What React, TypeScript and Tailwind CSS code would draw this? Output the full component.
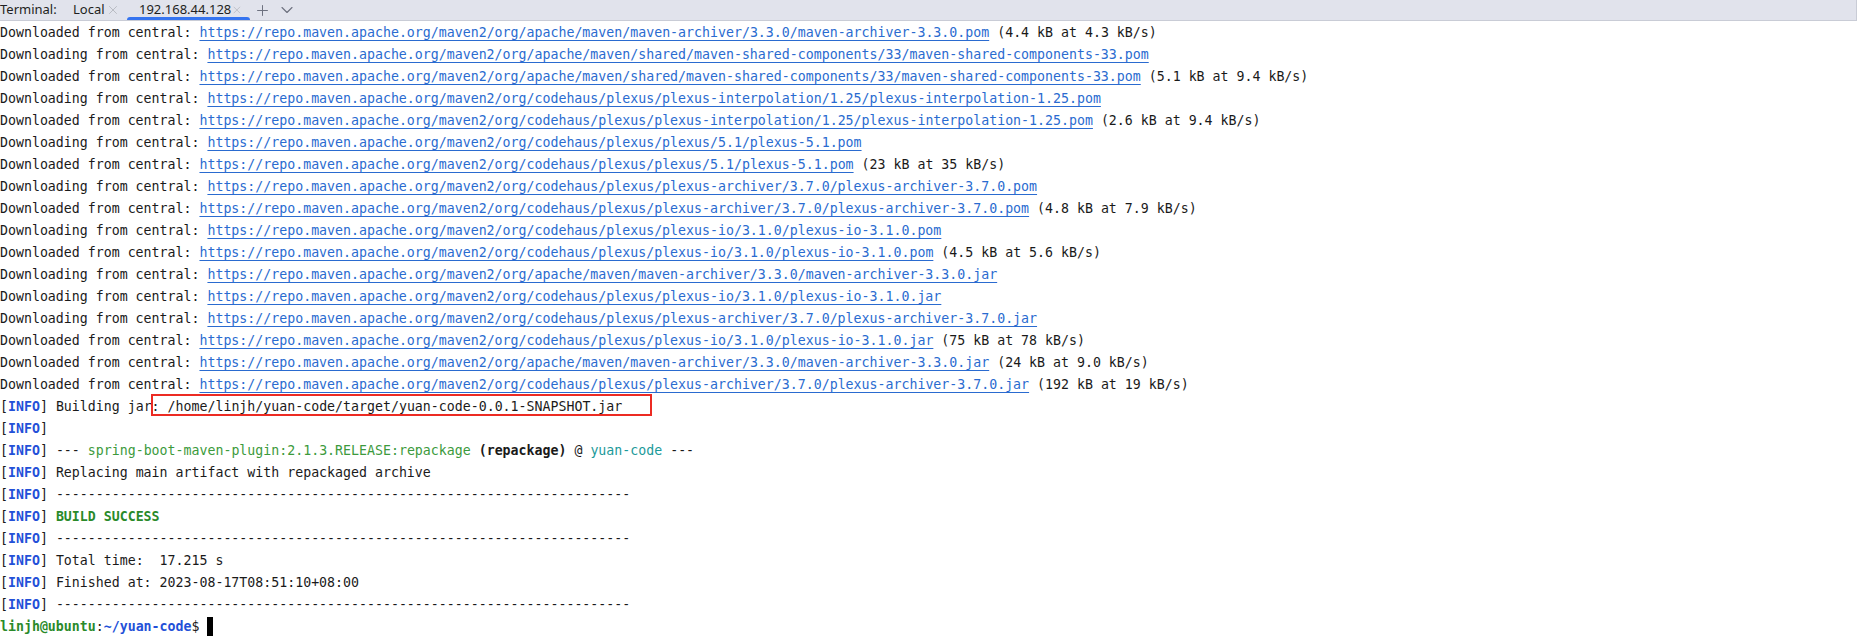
import { X, Plus, ChevronDown } from "lucide-react";

const base = "https://repo.maven.apache.org/maven2/org/";

type Dl = { verb: "Downloading" | "Downloaded"; path: string; stat?: string };

const downloads: Dl[] = [
  { verb: "Downloaded", path: "apache/maven/maven-archiver/3.3.0/maven-archiver-3.3.0.pom", stat: "(4.4 kB at 4.3 kB/s)" },
  { verb: "Downloading", path: "apache/maven/shared/maven-shared-components/33/maven-shared-components-33.pom" },
  { verb: "Downloaded", path: "apache/maven/shared/maven-shared-components/33/maven-shared-components-33.pom", stat: "(5.1 kB at 9.4 kB/s)" },
  { verb: "Downloading", path: "codehaus/plexus/plexus-interpolation/1.25/plexus-interpolation-1.25.pom" },
  { verb: "Downloaded", path: "codehaus/plexus/plexus-interpolation/1.25/plexus-interpolation-1.25.pom", stat: "(2.6 kB at 9.4 kB/s)" },
  { verb: "Downloading", path: "codehaus/plexus/plexus/5.1/plexus-5.1.pom" },
  { verb: "Downloaded", path: "codehaus/plexus/plexus/5.1/plexus-5.1.pom", stat: "(23 kB at 35 kB/s)" },
  { verb: "Downloading", path: "codehaus/plexus/plexus-archiver/3.7.0/plexus-archiver-3.7.0.pom" },
  { verb: "Downloaded", path: "codehaus/plexus/plexus-archiver/3.7.0/plexus-archiver-3.7.0.pom", stat: "(4.8 kB at 7.9 kB/s)" },
  { verb: "Downloading", path: "codehaus/plexus/plexus-io/3.1.0/plexus-io-3.1.0.pom" },
  { verb: "Downloaded", path: "codehaus/plexus/plexus-io/3.1.0/plexus-io-3.1.0.pom", stat: "(4.5 kB at 5.6 kB/s)" },
  { verb: "Downloading", path: "apache/maven/maven-archiver/3.3.0/maven-archiver-3.3.0.jar" },
  { verb: "Downloading", path: "codehaus/plexus/plexus-io/3.1.0/plexus-io-3.1.0.jar" },
  { verb: "Downloading", path: "codehaus/plexus/plexus-archiver/3.7.0/plexus-archiver-3.7.0.jar" },
  { verb: "Downloaded", path: "codehaus/plexus/plexus-io/3.1.0/plexus-io-3.1.0.jar", stat: "(75 kB at 78 kB/s)" },
  { verb: "Downloaded", path: "apache/maven/maven-archiver/3.3.0/maven-archiver-3.3.0.jar", stat: "(24 kB at 9.0 kB/s)" },
  { verb: "Downloaded", path: "codehaus/plexus/plexus-archiver/3.7.0/plexus-archiver-3.7.0.jar", stat: "(192 kB at 19 kB/s)" },
];

const rule = "-".repeat(72);

function Info({ children }: { children?: React.ReactNode }) {
  return (
    <div className="h-[22px] leading-[22px] whitespace-pre">
      [<span className="font-bold text-[#2350d8]">INFO</span>]{children ? " " : ""}
      {children}
    </div>
  );
}

function Tab({ label, active, width }: { label: string; active?: boolean; width: string }) {
  return (
    <div className={`relative flex h-full shrink-0 items-center justify-between pl-[12px] pr-[7px] ${width}`}>
      <span className="text-[#1e1f22]">{label}</span>
      <X size={14} strokeWidth={1.2} className="text-[#a8abb2]" />
      {active && <span className="absolute bottom-0 left-0 right-0 h-[3px] rounded-t bg-[#3574f0]" />}
    </div>
  );
}

export default function App() {
  return (
    <div className="h-[636px] w-[1857px] overflow-hidden bg-white">
      <div className="flex h-[21px] items-center border-b border-r border-[#c9ccd6] bg-[#e1e3ec] text-[13px] font-['Noto_Sans','Open_Sans',sans-serif]">
        <span className="w-[61px] shrink-0 text-[#1e1f22]">Terminal:</span>
        <Tab label="Local" width="w-[66px]" />
        <Tab label="192.168.44.128" width="w-[123px]" active />
        <div className="ml-[4px] flex items-center gap-[6px] text-[#6c707e]">
          <Plus size={17} strokeWidth={1.4} />
          <ChevronDown size={20} strokeWidth={1.3} />
        </div>
      </div>

      <div className="pt-px font-['DejaVu_Sans_Mono',monospace] text-[13.25px] text-[#1a1a1a]">
        {downloads.map((d, i) => (
          <div key={i} className="h-[22px] leading-[22px] whitespace-pre">
            {d.verb} from central:{" "}
            <span className="text-[#2a6bd0] underline decoration-[#2a6bd0] underline-offset-[3px]">
              {base + d.path}
            </span>
            {d.stat ? " " + d.stat : ""}
          </div>
        ))}
        <Info>
          Building ja
          <span className="relative">
            r
            <span className="absolute left-[7px] top-[-5px] h-[22px] w-[501px] border-2 border-[#ec2b23]" />
          </span>
          : /home/linjh/yuan-code/target/yuan-code-0.0.1-SNAPSHOT.jar
        </Info>
        <Info />
        <Info>
          --- <span className="text-[#3c9a3c]">spring-boot-maven-plugin:2.1.3.RELEASE:repackage</span>{" "}
          <span className="font-bold">(repackage)</span> @ <span className="text-[#1b9a9a]">yuan-code</span> ---
        </Info>
        <Info>Replacing main artifact with repackaged archive</Info>
        <Info>{rule}</Info>
        <Info>
          <span className="font-bold text-[#2a8a2a]">BUILD SUCCESS</span>
        </Info>
        <Info>{rule}</Info>
        <Info>Total time:  17.215 s</Info>
        <Info>Finished at: 2023-08-17T08:51:10+08:00</Info>
        <Info>{rule}</Info>
        <div className="flex h-[22px] items-center leading-[22px] whitespace-pre">
          <span className="font-bold text-[#2a8a2a]">linjh@ubuntu</span>:
          <span className="font-bold text-[#2350d8]">~/yuan-code</span>$ 
          <span className="ml-[8px] inline-block h-[20px] w-[6px] bg-black" />
        </div>
      </div>
    </div>
  );
}
